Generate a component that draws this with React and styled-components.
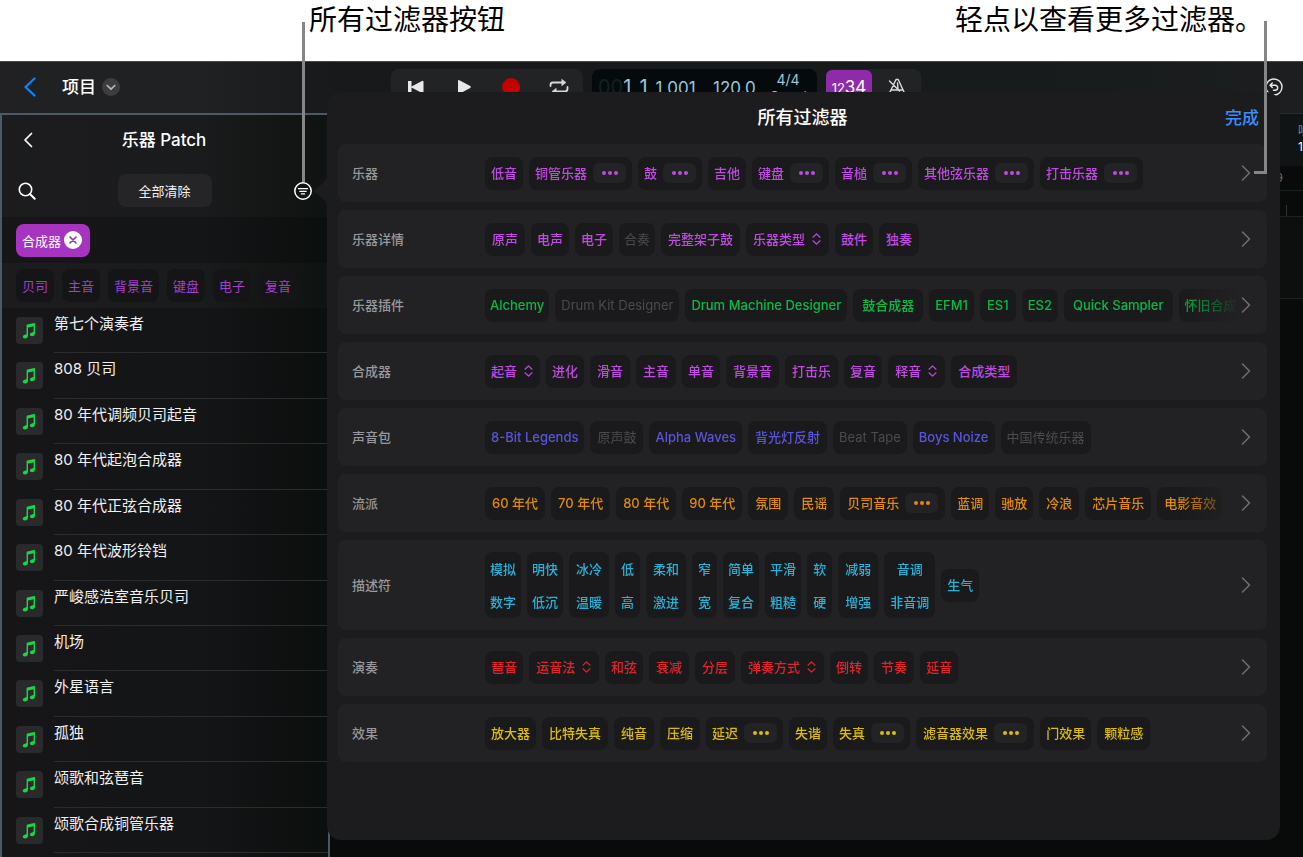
import React from 'react';
import styled, { createGlobalStyle } from 'styled-components';

const GlobalStyle = createGlobalStyle`
  * { box-sizing: border-box; }
  html, body { margin: 0; padding: 0; background: #fff; }
  body {
    font-family: Inter, 'Noto Sans CJK SC', sans-serif;
    color: #fff;
  }
  button {
    font: inherit;
    color: inherit;
    background: none;
    border: 0;
    padding: 0;
    cursor: pointer;
  }
  ul { list-style: none; margin: 0; padding: 0; }
  svg { display: block; }
  h1, h2 { margin: 0; }
`;

const Page = styled.div`
  position: relative;
  display: flex;
  flex-direction: column;
  min-height: 100vh;
  overflow: hidden;
`;

const Callouts = styled.header`
  display: flex;
  justify-content: space-between;
  height: 61px;
  padding: 0 40px 0 309px;
  color: #000;
  font-size: 28px;
  font-weight: 400;
  line-height: 40px;
  white-space: nowrap;
`;

const FilterLeader = styled.div`
  position: absolute;
  z-index: 3;
  left: 302px;
  top: 22px;
  width: 3px;
  height: 160px;
  background: #868686;
`;

const MoreLeader = styled.div`
  position: absolute;
  z-index: 3;
  right: 36px;
  top: 21px;
  width: 13px;
  height: 153px;
  border: solid #868686;
  border-width: 0 3px 3px 0;
`;

const Workspace = styled.div`
  position: relative;
  flex: 1;
  display: flex;
  flex-direction: column;
  background: #080b0a;
`;

const ControlBar = styled.nav`
  display: flex;
  align-items: center;
  height: 52px;
  padding-bottom: 1px;
  border-top: 1px solid #47494a;
  background: linear-gradient(90deg, #212123 0, #202122 200px, #17191a 340px, #171b1b 1000px, #1c1e1f 100%);
`;

const BarStart = styled.div`
  display: flex;
  align-items: center;
  width: 391px;
  padding-left: 22px;
`;

const ProjectButton = styled.button`
  display: flex;
  align-items: center;
  gap: 6px;
  margin-left: 24px;
  font-size: 17px;
  font-weight: 500;
  line-height: 24px;
`;

const Transport = styled.div`
  display: flex;
  align-items: center;
  justify-content: space-around;
  width: 192px;
  height: 36px;
  border-radius: 8px;
  background: #212325;
`;

const Display = styled.div`
  display: flex;
  align-items: baseline;
  width: 225px;
  height: 36px;
  margin-left: 9px;
  padding: 0 8px 0 6px;
  border-radius: 8px;
  background: #050b0c;
  color: #9cc4da;
  font-size: 17px;
  line-height: 36px;
  overflow: hidden;
  white-space: nowrap;
`;

const Position = styled.span`
  flex: 1;
  display: flex;
  gap: 8px;
  align-items: baseline;
`;

const BigDigits = styled.span`
  font-size: 20px;
`;

const LeadingZeros = styled.span`
  color: #14201f;
`;

const Tempo = styled.span`
  width: 54px;
`;

const Signature = styled.span`
  display: flex;
  flex-direction: column;
  align-self: flex-start;
  align-items: center;
  width: 42px;
  padding-top: 2px;
  font-size: 14px;
  line-height: 17px;
`;

const CountGroup = styled.div`
  display: flex;
  align-items: center;
  width: 95px;
  height: 36px;
  margin-left: 9px;
  border-radius: 8px;
  background: #212325;
`;

const CountIn = styled.button`
  width: 46px;
  height: 34px;
  border-radius: 6px;
  background: #8f2ba8;
  font-size: 17px;
  font-weight: 400;
  line-height: 34px;

  small { font-size: 13px; }
`;

const Metronome = styled.button`
  flex: 1;
  display: flex;
  justify-content: center;
`;

const UndoButton = styled.button`
  margin: 0 20px 0 auto;
`;

const Body = styled.div`
  flex: 1;
  display: flex;
`;

const Sidebar = styled.aside`
  display: flex;
  flex-direction: column;
  width: 330px;
  border: solid #4a5a68;
  border-width: 2px 2px 0 2px;
  background: linear-gradient(90deg, #161618 0, #141517 200px, #0b0f0d 320px);
`;

const Band = styled.div`
  background: linear-gradient(90deg, #1c1c1e 0, #1a1b1c 200px, #0f1311 320px);
`;

const TitleRow = styled.div`
  display: grid;
  grid-template-columns: 40px 1fr 40px;
  align-items: center;
  height: 49px;
  padding: 0 14px 0 12px;
`;

const SidebarTitle = styled.h1`
  text-align: center;
  font-size: 17px;
  font-weight: 500;
  line-height: 24px;
`;

const IconButton = styled.button`
  width: 27px;
  height: 27px;
  display: flex;
  align-items: center;
  justify-content: center;
`;

const SearchRow = styled.div`
  display: flex;
  align-items: center;
  justify-content: space-between;
  height: 53px;
  padding: 0 12px 0 11px;
`;

const ClearButton = styled.button`
  width: 94px;
  height: 33px;
  border-radius: 8px;
  background: #252528;
  color: #f2f2f2;
  font-size: 13px;
`;

const ActiveRow = styled.div`
  display: flex;
  align-items: center;
  height: 46px;
  padding-left: 14px;
`;

const ActiveFilter = styled.button`
  display: flex;
  align-items: center;
  justify-content: space-between;
  width: 74px;
  height: 33px;
  padding: 0 8px 0 6px;
  border-radius: 8px;
  background: #a634c0;
  color: #fff;
  font-size: 13px;
`;

const Suggestions = styled(Band)`
  display: flex;
  align-items: center;
  gap: 8px;
  height: 45px;
  padding-left: 14px;
`;

const Suggestion = styled.button`
  height: 33px;
  padding: 0 6px;
  border-radius: 8px;
  background: #151517;
  color: #a43fc9;
  font-size: 13px;
`;

const PatchList = styled.ul`
  flex: 1;
  display: grid;
  grid-auto-rows: 1fr;
  padding: 0 0 4px 14px;
`;

const PatchItem = styled.li`
  display: flex;
  gap: 11px;
  min-height: 45px;
`;

const PatchBadge = styled.span`
  width: 27px;
  height: 27px;
  margin-top: 9px;
  border-radius: 4px;
  background: #2a2a2d;
`;

const PatchName = styled.button`
  flex: 1;
  display: flex;
  align-items: flex-start;
  padding-top: 4px;
  border-bottom: 1px solid #2a2c2d;
  color: #f0f0f0;
  font-size: 15px;
  line-height: 24px;
  text-align: left;
`;

const Tracks = styled.main`
  flex: 1;
  display: flex;
  flex-direction: column;
  align-items: stretch;
  margin-left: 4px;
`;

const TrackHeader = styled.div`
  display: flex;
  justify-content: flex-end;
  height: 53px;
  border-top: 1px solid #2a2d2e;
  background: #111414;
`;

const TrackReadout = styled.div`
  width: 5px;
  padding-top: 9px;
  color: #fff;
  font-size: 12px;
  line-height: 16px;
  white-space: nowrap;
  overflow: hidden;

  small { display: block; color: #85878a; font-size: 12px; }
`;

const Ruler = styled.div`
  display: flex;
  justify-content: flex-end;
  align-items: center;
  height: 25px;
  padding-right: 20px;
  border-bottom: 1px solid #1d2020;
  color: #6c6f70;
  font-size: 12px;
  line-height: 16px;
`;

const Ticks = styled.div`
  height: 26px;
  border-bottom: 1px solid #1d2020;
  display: flex;
  justify-content: flex-end;
  align-items: flex-end;
  padding-right: 16px;
`;

const Tick = styled.i`
  width: 1px;
  height: 11px;
  background: #303435;
`;

const Lane = styled.div`
  height: 82px;
  border-bottom: 1px solid #1d2020;
  background: #0c0f0e;
`;

const Popover = styled.section`
  position: absolute;
  z-index: 2;
  left: 327px;
  right: 23px;
  top: 31px;
  bottom: 17px;
  padding: 0 13px 0 11px;
  border-radius: 14px;
  background: #1c1c1e;
`;

const Pointer = styled.svg`
  position: absolute;
  left: -14px;
  top: 84px;
`;

const PopoverHeader = styled.header`
  display: grid;
  grid-template-columns: 1fr auto 1fr;
  align-items: center;
  height: 52px;
  font-size: 17px;
  line-height: 24px;
`;

const PopoverTitle = styled.h2`
  grid-column: 2;
  font-size: 18px;
  font-weight: 500;
`;

const DoneButton = styled.button`
  justify-self: end;
  margin-right: 8px;
  color: #3f8df7;
  font-weight: 500;
`;

const Categories = styled.div`
  display: flex;
  flex-direction: column;
  gap: 8px;
`;

const Category = styled.div`
  display: flex;
  align-items: center;
  min-height: 58px;
  padding: 12px 13px 12px 14px;
  border-radius: 8px;
  background: #222224;
`;

const CategoryName = styled.span`
  flex: 0 0 133px;
  color: #98989d;
  font-size: 13px;
  font-weight: 500;
  line-height: 20px;
`;

const ChipScroller = styled.div`
  flex: 1 1 0;
  min-width: 0;
  display: flex;
  align-items: center;
  gap: 6px;
  overflow: hidden;
  mask-image: linear-gradient(90deg, #000 calc(100% - 60px), transparent);
`;

const padding = { tight: '0 5px', normal: '0 6px', wide: '0 7px', roomy: '0 9px' };

const Chip = styled.button`
  flex: none;
  display: flex;
  align-items: center;
  gap: 6px;
  height: 33px;
  padding: ${(p) => padding[p.$pad]};
  border-radius: 8px;
  background: #1a1a1c;
  color: ${(p) => (p.disabled ? '#4b4b4e' : p.$color)};
  font-size: 13px;
  font-weight: ${(p) => (p.disabled ? 400 : 500)};
  line-height: 20px;
  white-space: nowrap;
`;

const MorePill = styled.span`
  display: flex;
  align-items: center;
  justify-content: center;
  gap: 2px;
  width: 33px;
  height: 20px;
  border-radius: 6px;
  background: #232326;

  i {
    width: 4px;
    height: 4px;
    border-radius: 50%;
    background: currentColor;
  }
`;

const ChipPair = styled.div`
  flex: none;
  display: flex;
  flex-direction: column;
  border-radius: 8px;
  background: #1a1a1c;
`;

const PairButton = styled.button`
  height: 33px;
  padding: ${(p) => padding[p.$pad]};
  color: ${(p) => p.$color};
  font-size: 13px;
  font-weight: 500;
  line-height: 20px;
`;

const OpenButton = styled.button`
  flex: none;
  width: 16px;
  height: 24px;
  display: flex;
  align-items: center;
  justify-content: center;
`;

const PURPLE = '#bf4be0';
const GREEN = '#0cb844';
const INDIGO = '#5856d8';
const ORANGE = '#e08a0a';
const CYAN = '#2bb0d6';
const RED = '#dc262e';
const YELLOW = '#dcbc08';

const c = (label, pad = 'normal', extra = {}) => ({ label, pad, ...extra });
const more = { more: true };
const step = { step: true };
const off = { off: true };
const pair = (label, second, pad = 'normal') => ({ label, second, pad });

const categories = [
  { name: '乐器', color: PURPLE, chips: [c('低音'), c('铜管乐器', 'normal', more), c('鼓', 'normal', more), c('吉他'), c('键盘', 'normal', more), c('音槌', 'normal', more), c('其他弦乐器', 'normal', more), c('打击乐器', 'normal', more)] },
  { name: '乐器详情', color: PURPLE, chips: [c('原声', 'wide'), c('电声'), c('电子'), c('合奏', 'tight', off), c('完整架子鼓', 'wide'), c('乐器类型', 'wide', step), c('鼓件'), c('独奏', 'wide')] },
  { name: '乐器插件', color: GREEN, chips: [c('Alchemy', 'tight'), c('Drum Kit Designer', 'normal', off), c('Drum Machine Designer'), c('鼓合成器', 'roomy'), c('EFM1'), c('ES1', 'wide'), c('ES2'), c('Quick Sampler', 'roomy'), c('怀旧合成')] },
  { name: '合成器', color: PURPLE, chips: [c('起音', 'normal', step), c('进化'), c('滑音', 'wide'), c('主音', 'wide'), c('单音'), c('背景音', 'wide'), c('打击乐', 'wide'), c('复音'), c('释音', 'wide', step), c('合成类型', 'wide')] },
  { name: '声音包', color: INDIGO, chips: [c('8-Bit Legends'), c('原声鼓', 'wide', off), c('Alpha Waves'), c('背光灯反射', 'wide'), c('Beat Tape', 'normal', off), c('Boys Noize'), c('中国传统乐器', 'normal', off)] },
  { name: '流派', color: ORANGE, chips: [c('60 年代', 'wide'), c('70 年代', 'wide'), c('80 年代', 'wide'), c('90 年代', 'wide'), c('氛围', 'wide'), c('民谣', 'wide'), c('贝司音乐', 'wide', more), c('蓝调'), c('驰放'), c('冷浪', 'wide'), c('芯片音乐', 'wide'), c('电影音效', 'wide')] },
  { name: '描述符', color: CYAN, chips: [pair('模拟', '数字', 'tight'), pair('明快', '低沉', 'tight'), pair('冰冷', '温暖', 'wide'), pair('低', '高'), pair('柔和', '激进', 'wide'), pair('窄', '宽'), pair('简单', '复合', 'tight'), pair('平滑', '粗糙', 'tight'), pair('软', '硬'), pair('减弱', '增强', 'wide'), pair('音调', '非音调'), c('生气')] },
  { name: '演奏', color: RED, chips: [c('琶音'), c('运音法', 'wide', step), c('和弦'), c('衰减', 'wide'), c('分层', 'wide'), c('弹奏方式', 'wide', step), c('倒转'), c('节奏', 'wide'), c('延音')] },
  { name: '效果', color: YELLOW, chips: [c('放大器'), c('比特失真', 'wide'), c('纯音', 'wide'), c('压缩', 'wide'), c('延迟', 'normal', more), c('失谐'), c('失真', 'normal', more), c('滤音器效果', 'wide', more), c('门效果'), c('颗粒感', 'wide')] },
];

const suggestions = ['贝司', '主音', '背景音', '键盘', '电子', '复音'];

const patches = ['第七个演奏者', '808 贝司', '80 年代调频贝司起音', '80 年代起泡合成器', '80 年代正弦合成器', '80 年代波形铃铛', '严峻感浩室音乐贝司', '机场', '外星语言', '孤独', '颂歌和弦琶音', '颂歌合成铜管乐器'];

const line = { fill: 'none', strokeLinecap: 'round', strokeLinejoin: 'round' };

const StepperIcon = () => (
  <svg width="11" height="14" viewBox="0 0 11 14" stroke="currentColor" strokeWidth="1.2" {...line}>
    <path d="M2 5.200 5.500 1.900 9 5.200M2 8.800 5.500 12.100 9 8.800" />
  </svg>
);

const NoteIcon = () => (
  <svg width="27" height="27" viewBox="0 0 27 27" fill="#19d548">
    <path d="M10.6 8.4c0-.5.3-.9.8-1L18.2 6c.5-.1.8.1.8.6v2.5l-7 1.5v8c0 1.800-1.300 2.900-3 2.900-1.300 0-2.200-.7-2.200-1.700 0-1.100.9-1.800 2.100-2.100 1.200-.2 1.700-.4 1.700-1.100z" />
    <path d="M17.600 8H19v8.300c0 1.800-1.300 2.900-2.900 2.900-1.300 0-2.200-.7-2.200-1.700 0-1.100.9-1.800 2.100-2.100 1.100-.2 1.600-.4 1.600-1.100z" />
  </svg>
);

function FilterChip({ item, color }) {
  if (item.second) {
    return (
      <ChipPair>
        <PairButton $pad={item.pad} $color={color}>{item.label}</PairButton>
        <PairButton $pad={item.pad} $color={color}>{item.second}</PairButton>
      </ChipPair>
    );
  }
  return (
    <Chip $pad={item.pad} $color={color} disabled={item.off}>
      {item.label}
      {item.more && <MorePill><i /><i /><i /></MorePill>}
      {item.step && <StepperIcon />}
    </Chip>
  );
}

export default function App() {
  return (
    <Page>
      <GlobalStyle />
      <Callouts>
        <span>所有过滤器按钮</span>
        <span>轻点以查看更多过滤器。</span>
      </Callouts>
      <FilterLeader />
      <MoreLeader />

      <Workspace>
        <ControlBar>
          <BarStart>
            <button aria-label="返回">
              <svg width="16" height="22" viewBox="0 0 16 22" stroke="#0a84ff" strokeWidth="2.3" {...line}>
                <path d="M12.500 2.500 3.500 11l9 8.500" />
              </svg>
            </button>
            <ProjectButton>
              项目
              <svg width="18" height="18" viewBox="0 0 18 18">
                <circle cx="9" cy="9" r="9" fill="#3d3d41" />
                <path d="M5.200 7.500 9 11.200l3.800-3.700" stroke="#b5b5ba" strokeWidth="1.700" {...line} />
              </svg>
            </ProjectButton>
          </BarStart>
          <Transport>
            <button aria-label="回到开头">
              <svg width="20" height="18" viewBox="0 0 20 18" fill="#e8e8e8">
                <path d="M2 3h3.500v5.500L16 3q1.500-.6 1.500 1v10q0 1.600-1.500 1L5.500 9.500V15H2z" />
              </svg>
            </button>
            <button aria-label="播放">
              <svg width="18" height="18" viewBox="0 0 18 18" fill="#e8e8e8">
                <path d="M3 3q0-1.500 1.400-.8l10.800 5.900q1.500.9 0 1.800L4.400 15.800Q3 16.500 3 15z" />
              </svg>
            </button>
            <button aria-label="录音">
              <svg width="18" height="18" viewBox="0 0 18 18"><circle cx="9" cy="9" r="9" fill="#c40000" /></svg>
            </button>
            <button aria-label="循环">
              <svg width="20" height="18" viewBox="0 0 20 18" stroke="#d8d8d8" strokeWidth="1.800" {...line}>
                <path d="M1.500 8V7q0-2.500 2.500-2.500h10M18.500 9v1.500q0 3-2.500 3H6" />
                <path d="M13 1.500 17 4.500 13 7.500zM7 10.500l-4 3 4 3z" fill="#d8d8d8" strokeWidth=".6" />
              </svg>
            </button>
          </Transport>
          <Display>
            <Position>
              <BigDigits><LeadingZeros>00</LeadingZeros>1</BigDigits>
              <BigDigits>1</BigDigits>
              <span>1 001</span>
            </Position>
            <Tempo>120.0</Tempo>
            <Signature>
              <span>4/4</span>
              <span>C maj</span>
            </Signature>
          </Display>
          <CountGroup>
            <CountIn><small>12</small>34</CountIn>
            <Metronome aria-label="节拍器">
              <svg width="18" height="18" viewBox="0 0 18 18" stroke="#dcdcdc" strokeWidth="1.400" {...line}>
                <path d="M8 1.500h2.200L16 14q.5 1.500-1 1.500H2.500Q1 15.500 2 14zM3.500 12h11M1.500 3l10 10M10 11l-.5-6" />
              </svg>
            </Metronome>
          </CountGroup>
          <UndoButton aria-label="撤销">
            <svg width="18" height="18" viewBox="0 0 18 18" stroke="#e8e8e8" strokeWidth="1.400" {...line}>
              <circle cx="9" cy="9" r="8" />
              <path d="M7.300 5 5 7.300l2.300 2.300M5.200 7.300h5q2.500.2 2.500 2.500t-2.500 2.500H8.500" />
            </svg>
          </UndoButton>
        </ControlBar>

        <Body>
          <Sidebar>
            <Band>
              <TitleRow>
                <IconButton aria-label="后退">
                  <svg width="14" height="18" viewBox="0 0 14 18" stroke="#fff" strokeWidth="1.700" {...line}>
                    <path d="M10.500 2.500 4 9l6.500 6.500" />
                  </svg>
                </IconButton>
                <SidebarTitle>乐器 Patch</SidebarTitle>
              </TitleRow>
              <SearchRow>
                <IconButton aria-label="搜索">
                  <svg width="18" height="18" viewBox="0 0 18 18" stroke="#fff" strokeWidth="1.600" {...line}>
                    <circle cx="7.500" cy="7.500" r="6.200" />
                    <path d="m12.200 12.200 4.500 4.500" strokeWidth="2" />
                  </svg>
                </IconButton>
                <ClearButton>全部清除</ClearButton>
                <IconButton aria-label="所有过滤器">
                  <svg width="18" height="18" viewBox="0 0 18 18" stroke="#fff" strokeWidth="1.500" {...line}>
                    <circle cx="9" cy="9" r="8.200" />
                    <path d="M4.500 6.700h9M5.800 9.300h6.400M7.400 11.900h3.200" strokeWidth="1.300" />
                  </svg>
                </IconButton>
              </SearchRow>
            </Band>
            <ActiveRow>
              <ActiveFilter>
                合成器
                <svg width="18" height="18" viewBox="0 0 18 18">
                  <circle cx="9" cy="9" r="9" fill="#fff" />
                  <path d="m6 6 6 6m0-6-6 6" stroke="#8b3fa3" strokeWidth="1.700" {...line} />
                </svg>
              </ActiveFilter>
            </ActiveRow>
            <Suggestions>
              {suggestions.map((s) => <Suggestion key={s}>{s}</Suggestion>)}
            </Suggestions>
            <PatchList>
              {patches.map((name) => (
                <PatchItem key={name}>
                  <PatchBadge><NoteIcon /></PatchBadge>
                  <PatchName>{name}</PatchName>
                </PatchItem>
              ))}
            </PatchList>
          </Sidebar>
          <Tracks>
            <TrackHeader>
              <TrackReadout><small>响度</small>1</TrackReadout>
            </TrackHeader>
            <Ruler>9</Ruler>
            <Ticks><Tick /></Ticks>
            <Lane />
          </Tracks>
        </Body>

        <Popover aria-label="所有过滤器">
          <Pointer width="14" height="30" viewBox="0 0 14 30" fill="#1c1c1e">
            <path d="M14 0v30C13 25 9 22 2.500 17Q0 15 2.500 13C9 8 13 5 14 0z" />
          </Pointer>
          <PopoverHeader>
            <PopoverTitle>所有过滤器</PopoverTitle>
            <DoneButton>完成</DoneButton>
          </PopoverHeader>
          <Categories>
            {categories.map((cat) => (
              <Category key={cat.name}>
                <CategoryName>{cat.name}</CategoryName>
                <ChipScroller>
                  {cat.chips.map((item) => (
                    <FilterChip key={item.label} item={item} color={cat.color} />
                  ))}
                </ChipScroller>
                <OpenButton aria-label={`更多${cat.name}`}>
                  <svg width="10" height="18" viewBox="0 0 10 18" stroke="#6e6e73" strokeWidth="1.500" {...line}>
                    <path d="m1.500 2 7 7-7 7" />
                  </svg>
                </OpenButton>
              </Category>
            ))}
          </Categories>
        </Popover>
      </Workspace>
    </Page>
  );
}
